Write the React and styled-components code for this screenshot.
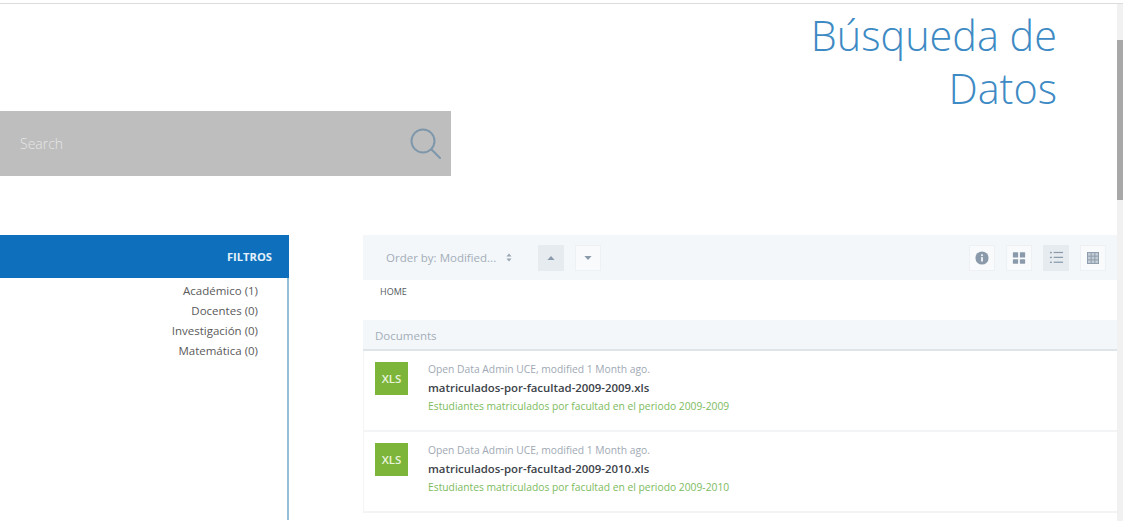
import React from "react";
import styled, { createGlobalStyle } from "styled-components";

const Global = createGlobalStyle`
  html, body { margin: 0; padding: 0; height: 528px; overflow: hidden; background: #fff; }
  body { font-family: "Open Sans", "Liberation Sans", sans-serif; }
  * { box-sizing: border-box; }
`;

const Frame = styled.div`
  height: 528px;
  display: flex;
  flex-direction: column;
  padding-top: 3px;
`;
const Viewport = styled.div`
  flex: none;
  height: 518px;
  display: flex;
  border-top: 1px solid #dcdcdc;
`;
const Content = styled.main`
  flex: 1;
  min-width: 0;
  overflow: hidden;
`;
const Scrollbar = styled.div`
  flex: none;
  width: 6px;
  background: #f1f1f1;
  padding-top: 36px;
`;
const Thumb = styled.div`
  height: 160px;
  background: #a8a8a8;
`;
const Header = styled.header`
  display: flex;
  justify-content: flex-end;
  padding: 5px 60px 0 0;
  height: 107px;
`;
const Title = styled.h1`
  margin: 0;
  width: 300px;
  text-align: right;
  font-size: 41.4px;
  line-height: 53px;
  font-weight: 300;
  color: #3d8ac4;
`;
const SearchBar = styled.div`
  width: 451px;
  height: 65px;
  background: #bebebe;
  display: flex;
  align-items: center;
  justify-content: space-between;
  padding: 0 8px 0 20px;
  color: #e6e6e6;
  font-size: 14px;
  font-weight: 300;
`;
const Columns = styled.div`
  display: flex;
  margin-top: 59px;
  height: 290px;
`;
const Sidebar = styled.aside`
  flex: none;
  width: 289px;
  height: 285px;
  border-right: 2px solid #93bfd6;
`;
const SidebarHead = styled.div`
  height: 43px;
  margin-right: -2px;
  background: #0e70bc;
  color: #e4f1fb;
  font-size: 11.2px;
  font-weight: 700;
  display: flex;
  align-items: center;
  justify-content: flex-end;
  padding-right: 17px;
`;
const FilterList = styled.ul`
  list-style: none;
  margin: 0;
  padding: 3px 29px 0 0;
  text-align: right;
`;
const FilterItem = styled.li`
  font-size: 11.5px;
  line-height: 20px;
  color: #5a5a5a;
`;
const Results = styled.section`
  flex: 1;
  min-width: 0;
  margin-left: 74px;
`;
const Toolbar = styled.div`
  height: 45px;
  background: #f3f7fa;
  display: flex;
  align-items: center;
  padding: 0 11px 0 23px;
`;
const OrderBy = styled.span`
  font-size: 11.5px;
  color: #a3adb8;
  width: 126px;
  display: flex;
  align-items: center;
  justify-content: space-between;
  margin-right: 26px;
`;
const ToolButton = styled.button`
  width: 26px;
  height: 26px;
  padding: 0;
  margin-left: ${(p) => p.$gap || 0}px;
  border: 1px solid ${(p) => (p.$active ? "#e6ebef" : "#edf1f4")};
  background: ${(p) => (p.$active ? "#e6ebef" : "#f8fafc")};
  display: flex;
  align-items: center;
  justify-content: center;
`;
const Spacer = styled.div`
  flex: 1;
`;
const Crumb = styled.div`
  height: 40px;
  padding: 6px 0 0 17px;
  font-size: 9px;
  line-height: 12px;
  color: #555b62;
`;
const SectionBar = styled.div`
  height: 31px;
  background: #f3f7fa;
  border-bottom: 2px solid #dfe4e9;
  padding-left: 12px;
  font-size: 11.5px;
  line-height: 31px;
  color: #a3adb8;
`;
const Row = styled.article`
  height: 81px;
  display: flex;
  padding: 11px 0 0 11px;
  border-left: 1px solid #f4f5f6;
  border-bottom: 2px solid #f3f4f5;
`;
const Badge = styled.div`
  flex: none;
  width: 33px;
  height: 33px;
  background: #7cb53a;
  color: #e9f4dc;
  font-size: 11.5px;
  font-weight: 600;
  display: flex;
  align-items: center;
  justify-content: center;
`;
const RowText = styled.div`
  margin: -2px 0 0 20px;
  display: flex;
  flex-direction: column;
`;
const Meta = styled.div`
  font-size: 10.3px;
  line-height: 19px;
  color: #a0a9b4;
`;
const Name = styled.div`
  font-size: 11.4px;
  line-height: 19px;
  font-weight: 600;
  color: #3c4249;
  margin-top: -1px;
`;
const Desc = styled.div`
  font-size: 10.3px;
  line-height: 19px;
  color: #7dbb5e;
`;

const Glyph = ({ children, size = 16 }) => (
  <svg width={size} height={size} viewBox="0 0 16 16" fill="#8a9aaa">{children}</svg>
);

const docs = [
  ["matriculados-por-facultad-2009-2009.xls", "Estudiantes matriculados por facultad en el periodo 2009-2009"],
  ["matriculados-por-facultad-2009-2010.xls", "Estudiantes matriculados por facultad en el periodo 2009-2010"],
];

export default function App() {
  return (
    <Frame>
      <Global />
      <Viewport>
        <Content>
          <Header>
            <Title>Búsqueda de Datos</Title>
          </Header>
          <SearchBar>
            Search
            <svg width="34" height="34" viewBox="0 0 34 34" fill="none" stroke="#7f97ab" strokeWidth="2">
              <circle cx="14" cy="14" r="11.5" />
              <path d="M22.5 22.5 L31 31" strokeLinecap="round" />
            </svg>
          </SearchBar>
          <Columns>
            <Sidebar>
              <SidebarHead>FILTROS</SidebarHead>
              <FilterList>
                <FilterItem>Académico (1)</FilterItem>
                <FilterItem>Docentes (0)</FilterItem>
                <FilterItem>Investigación (0)</FilterItem>
                <FilterItem>Matemática (0)</FilterItem>
              </FilterList>
            </Sidebar>
            <Results>
              <Toolbar>
                <OrderBy>
                  Order by: Modified...
                  <svg width="6" height="9" viewBox="0 0 6 9" fill="#98a4b0">
                    <path d="M3 0.5 L5.5 3.5 H0.5 Z M3 8.5 L0.5 5.5 H5.5 Z" />
                  </svg>
                </OrderBy>
                <ToolButton $active aria-label="asc">
                  <svg width="8" height="4" viewBox="0 0 9 5" fill="#8a9aaa"><path d="M4.5 0 L9 5 H0 Z" /></svg>
                </ToolButton>
                <ToolButton $gap={11} aria-label="desc">
                  <svg width="8" height="4" viewBox="0 0 9 5" fill="#8a9aaa"><path d="M4.5 5 L0 0 H9 Z" /></svg>
                </ToolButton>
                <Spacer />
                <ToolButton aria-label="info">
                  <Glyph size={14}>
                    <circle cx="8" cy="8" r="7.5" />
                    <rect x="7" y="7" width="2" height="5" fill="#f8fafc" />
                    <rect x="7" y="3.8" width="2" height="2" fill="#f8fafc" />
                  </Glyph>
                </ToolButton>
                <ToolButton $gap={11} aria-label="cards">
                  <Glyph size={14}>
                    <rect x="1" y="1.5" width="6" height="6" rx="0.5" />
                    <rect x="9" y="1.5" width="6" height="6" rx="0.5" />
                    <rect x="1" y="9.5" width="6" height="5" rx="0.5" />
                    <rect x="9" y="9.5" width="6" height="5" rx="0.5" />
                  </Glyph>
                </ToolButton>
                <ToolButton $gap={11} $active aria-label="list">
                  <Glyph size={15}>
                    <rect x="1" y="2" width="2" height="1.5" />
                    <rect x="5" y="2" width="10" height="1.3" />
                    <rect x="1" y="7.2" width="2" height="1.5" />
                    <rect x="5" y="7.2" width="10" height="1.3" />
                    <rect x="1" y="12.4" width="2" height="1.5" />
                    <rect x="5" y="12.4" width="10" height="1.3" />
                  </Glyph>
                </ToolButton>
                <ToolButton $gap={11} aria-label="table">
                  <svg width="12" height="12" viewBox="0 0 13 13" fill="none" stroke="#8a9aaa" strokeWidth="1">
                    <rect x="0.5" y="0.5" width="12" height="12" fill="#c3ccd5" />
                    <path d="M4.5 0.5 V12.5 M8.5 0.5 V12.5 M0.5 4.5 H12.5 M0.5 8.5 H12.5" />
                  </svg>
                </ToolButton>
              </Toolbar>
              <Crumb>HOME</Crumb>
              <SectionBar>Documents</SectionBar>
              {docs.map(([name, desc]) => (
                <Row key={name}>
                  <Badge>XLS</Badge>
                  <RowText>
                    <Meta>Open Data Admin UCE, modified 1 Month ago.</Meta>
                    <Name>{name}</Name>
                    <Desc>{desc}</Desc>
                  </RowText>
                </Row>
              ))}
            </Results>
          </Columns>
        </Content>
        <Scrollbar>
          <Thumb />
        </Scrollbar>
      </Viewport>
    </Frame>
  );
}
